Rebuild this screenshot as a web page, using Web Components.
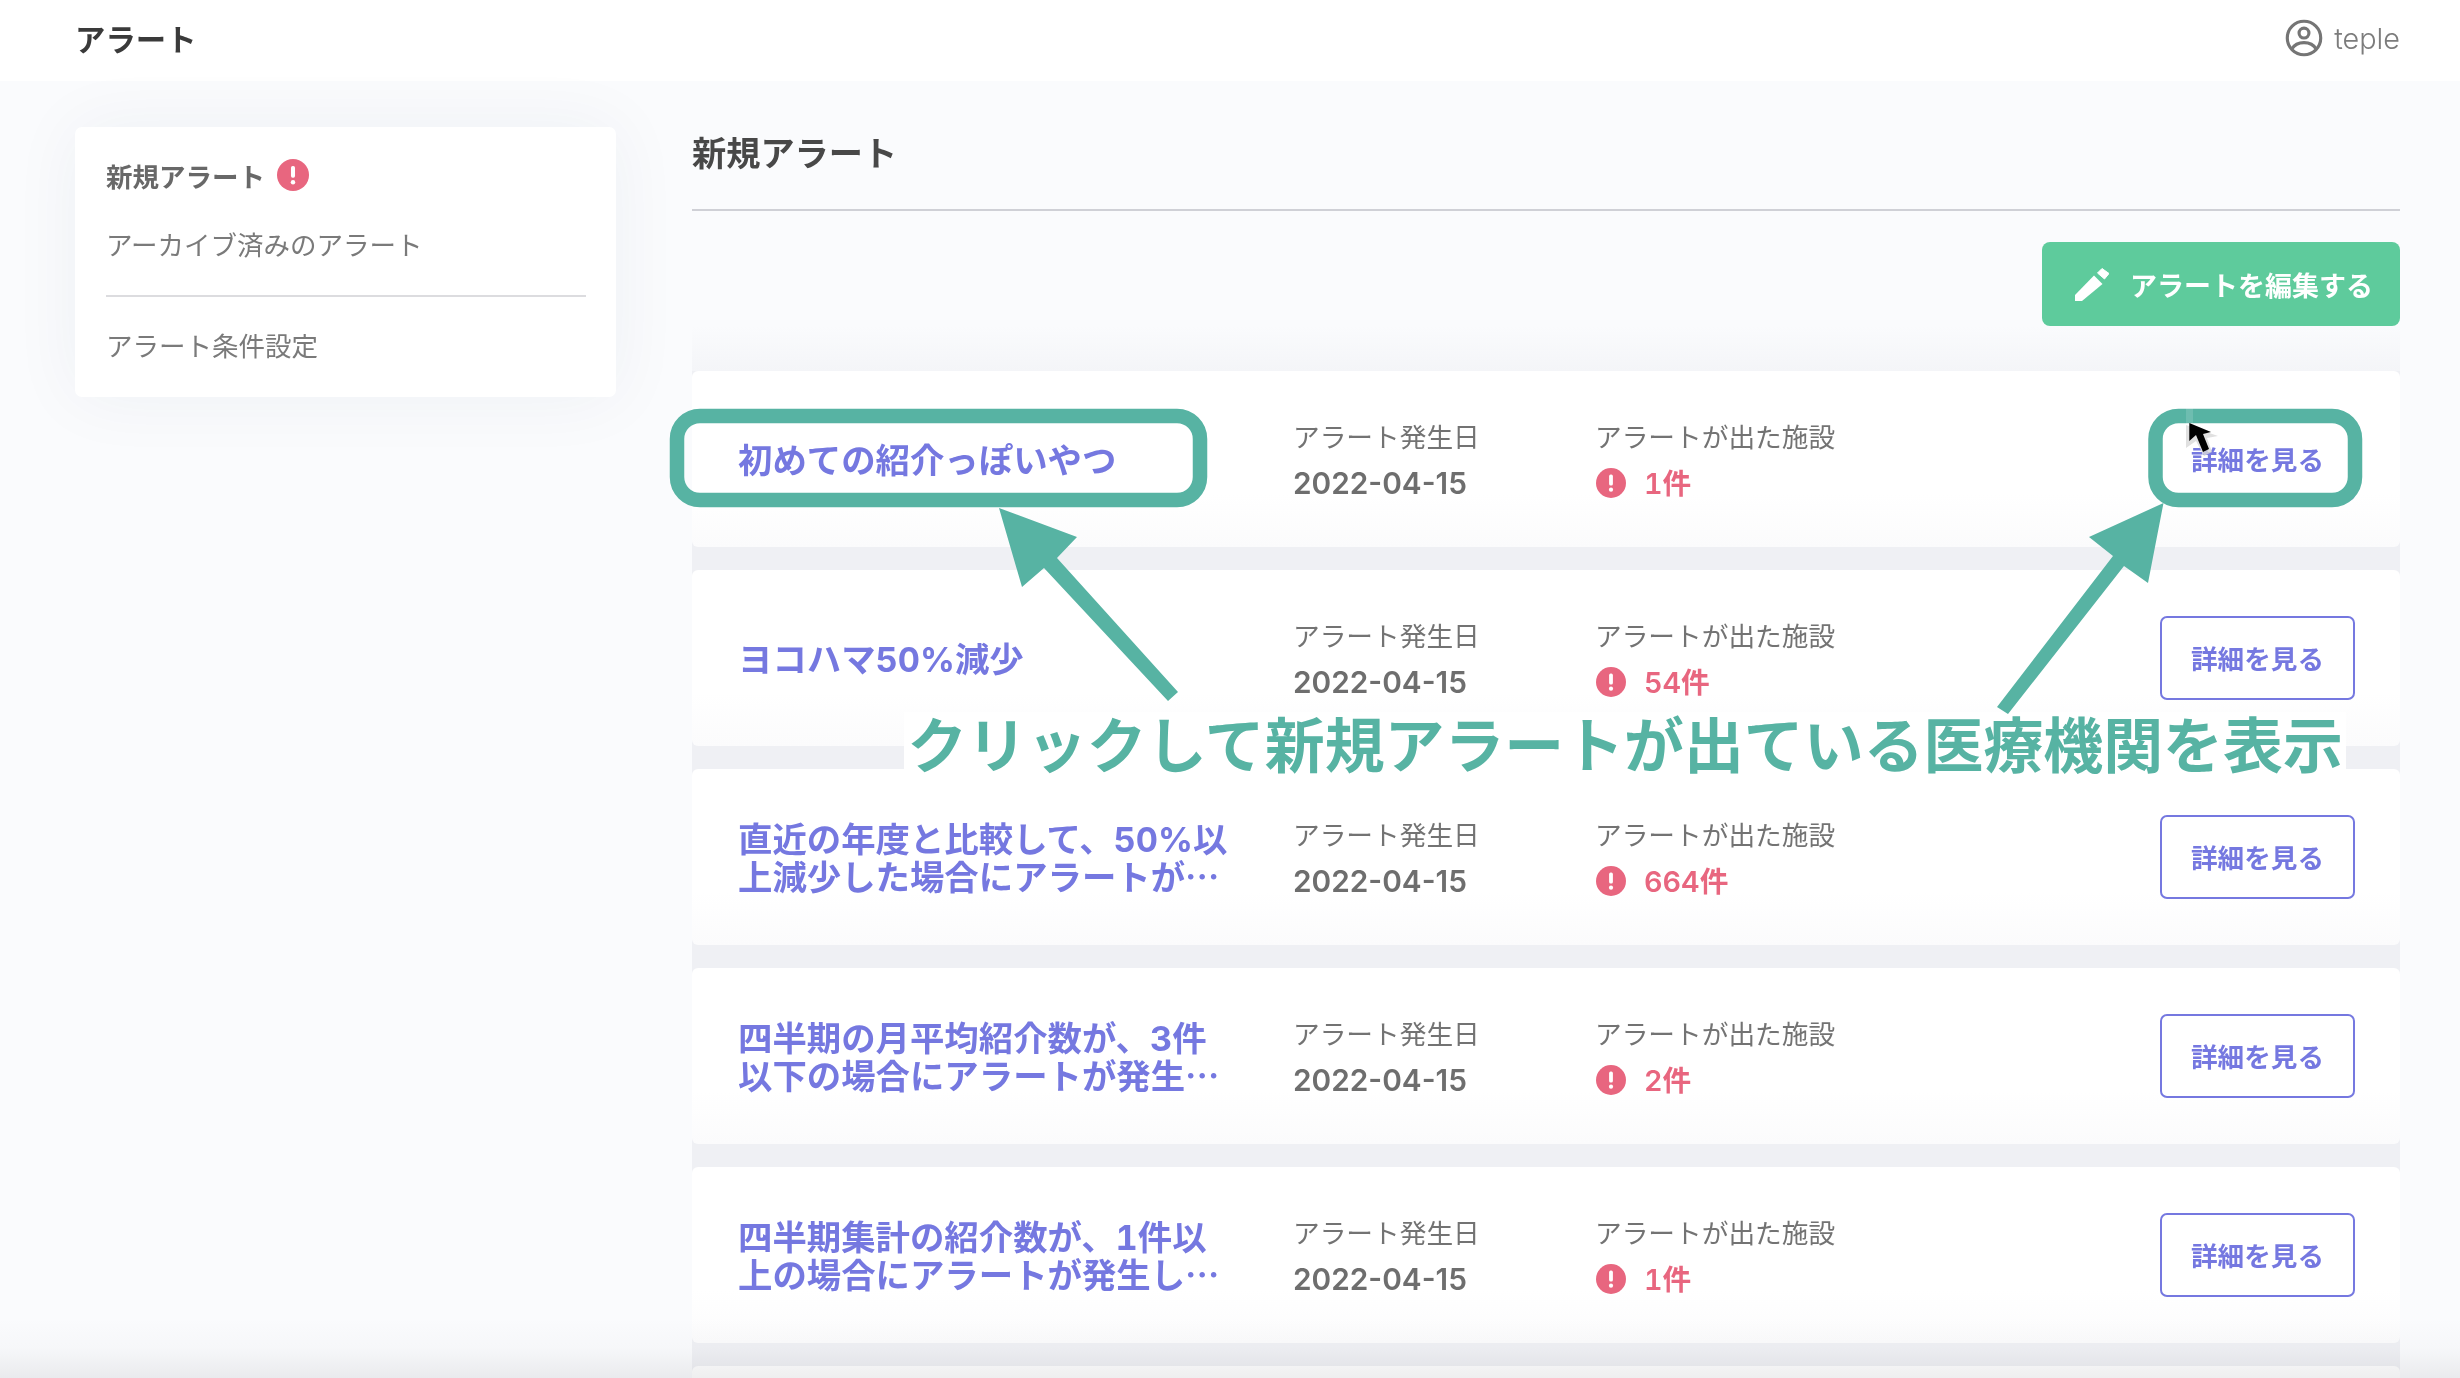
<!DOCTYPE html>
<html lang="ja">
<head>
<meta charset="utf-8">
<title>アラート</title>
<style>
  html, body { margin: 0; height: 1378px; overflow: hidden; background: #fafbfd; }
  body { font-family: Inter, "Noto Sans CJK JP", sans-serif; position: relative; }
</style>
</head>
<body>
<alert-page>
  <app-bar slot="bar" user="teple">アラート</app-bar>
  <side-nav slot="side">
    <nav-item active alert>新規アラート</nav-item>
    <nav-item>アーカイブ済みのアラート</nav-item>
    <nav-rule></nav-rule>
    <nav-item>アラート条件設定</nav-item>
  </side-nav>
  <alert-board slot="main" heading="新規アラート">
    <edit-button slot="action">アラートを編集する</edit-button>
    <alert-row date="2022-04-15" count="1件"><span>初めての紹介っぽいやつ</span></alert-row>
    <alert-row date="2022-04-15" count="54件"><span>ヨコハマ50%減少</span></alert-row>
    <alert-row date="2022-04-15" count="664件"><span>直近の年度と比較して、50%以<br>上減少した場合にアラートが⋯</span></alert-row>
    <alert-row date="2022-04-15" count="2件"><span>四半期の月平均紹介数が、3件<br>以下の場合にアラートが発生⋯</span></alert-row>
    <alert-row date="2022-04-15" count="1件"><span>四半期集計の紹介数が、1件以<br>上の場合にアラートが発生し⋯</span></alert-row>
    <alert-row empty></alert-row>
  </alert-board>
  <guide-layer slot="over">クリックして新規アラートが出ている医療機関を表示</guide-layer>
</alert-page>

<script>
const define = (name, html) => {
  customElements.define(name, class extends HTMLElement {
    constructor() {
      super();
      this.attachShadow({ mode: 'open' }).innerHTML = html;
    }
  });
};

customElements.define('alert-icon', class extends HTMLElement {
  constructor() {
    super();
    this.attachShadow({ mode: 'open' }).innerHTML = `
      <style>:host{display:inline-flex;width:var(--size,30px);height:var(--size,30px);flex:none}svg{width:100%;height:100%;display:block}</style>
      <svg viewBox="0 0 30 30"><circle cx="15" cy="15" r="15" fill="#e8667f"/><rect x="13.1" y="6.6" width="3.8" height="11" rx="1.6" fill="#fff"/><circle cx="15" cy="21.7" r="2.1" fill="#fff"/></svg>`;
  }
});

customElements.define('alert-page', class extends HTMLElement {
  constructor() {
    super();
    this.attachShadow({ mode: 'open' }).innerHTML = `
      <style>
        :host{display:block;height:1378px;overflow:hidden;position:relative;background:#fafbfd;filter:blur(.4px)}
        .body{display:grid;grid-template-columns:541px 1708px;column-gap:76px;padding:46px 60px 0 75px;align-items:start}
        .fade{position:absolute;left:0;right:0;bottom:0;height:60px;pointer-events:none;
              background:linear-gradient(to bottom,rgba(60,60,70,0),rgba(60,60,70,.02) 50%,rgba(60,60,70,.085))}
      </style>
      <slot name="bar"></slot>
      <div class="body"><slot name="side"></slot><slot name="main"></slot></div>
      <div class="fade"></div>
      <slot name="over"></slot>`;
  }
});

customElements.define('app-bar', class extends HTMLElement {
  constructor() {
    super();
    this.attachShadow({ mode: 'open' }).innerHTML = `
      <style>
        :host{display:flex;align-items:center;justify-content:space-between;height:81px;padding:0 60px 6px 75px;background:#fff;box-sizing:border-box}
        .t{font-size:30.4px;font-weight:700;color:#3a3a3a}
        .u{display:flex;align-items:center;gap:11px;color:#7c7c7c;font-size:28.8px;font-weight:300;padding-top:1px}
        svg{width:38px;height:38px;display:block}
      </style>
      <div class="t"><slot></slot></div>
      <div class="u">
        <svg viewBox="0 0 40 40" fill="none" stroke="#757575" stroke-width="3.3">
          <circle cx="20" cy="20" r="17.6"/>
          <circle cx="20" cy="14.8" r="5.2"/>
          <path d="M7.2 31.5C10 26.6 15 24.8 20 24.8s10 1.8 12.8 6.7"/>
        </svg>
        <span>${this.getAttribute('user')}</span>
      </div>`;
  }
});

define('side-nav', `
  <style>
    :host{display:flex;flex-direction:column;box-sizing:border-box;height:270px;background:#fff;border-radius:7px;padding:16px 30px 0 31px;
          box-shadow:0 0 70px rgba(40,50,90,.055)}
  </style><slot></slot>`);

customElements.define('nav-item', class extends HTMLElement {
  constructor() {
    super();
    const a = this.hasAttribute('alert');
    this.attachShadow({ mode: 'open' }).innerHTML = `
      <style>
        :host{display:flex;align-items:center;gap:12px;height:64px;font-size:26.5px;color:#7a7a7a;font-weight:400;--size:32px}
        :host([active]){font-weight:700;color:#686868}
        :host(:nth-of-type(2)){height:72px}
        :host(:last-child){margin-top:15.5px}
      </style><span><slot></slot></span>${a ? '<alert-icon></alert-icon>' : ''}`;
  }
});

define('nav-rule', `<style>:host{display:block;height:2px;background:#dcdcdf;margin-top:16px}</style>`);

customElements.define('alert-board', class extends HTMLElement {
  constructor() {
    super();
    this.attachShadow({ mode: 'open' }).innerHTML = `
      <style>
        :host{display:block}
        h2{margin:0;height:84px;box-sizing:border-box;border-bottom:2px solid #cfd0d6;font-size:34.2px;font-weight:700;color:#484848;line-height:54px}
        .act{display:flex;justify-content:flex-end;margin-top:31px}
        .list{margin-top:0;padding-top:45px;background:linear-gradient(to bottom,#fafbfd,#f4f5f8 100%) top/100% 45px no-repeat,#eff0f4;
              display:flex;flex-direction:column;gap:23px}
      </style>
      <h2>${this.getAttribute('heading')}</h2>
      <div class="act"><slot name="action"></slot></div>
      <div class="list"><slot></slot></div>`;
  }
});

customElements.define('edit-button', class extends HTMLElement {
  constructor() {
    super();
    this.attachShadow({ mode: 'open' }).innerHTML = `
      <style>
        :host{display:inline-flex;align-items:center;gap:21px;height:84px;box-sizing:border-box;padding:0 27px 0 33px;background:#5ecb9c;color:#fff;border-radius:8px;font-size:27px;font-weight:700}
        svg{width:34px;height:33px;display:block}
      </style>
      <svg viewBox="16 12 34 33" fill="#fff">
        <path d="M16 45V39L35 19.5 43.5 28 23 45Z"/>
        <path d="M43 12.5 50 17.5 45.5 23 38.5 17Z" stroke="#fff" stroke-width="1" stroke-linejoin="round"/>
      </svg>
      <span><slot></slot></span>`;
  }
});

customElements.define('detail-button', class extends HTMLElement {
  constructor() {
    super();
    this.attachShadow({ mode: 'open' }).innerHTML = `
      <style>
        :host{display:flex;align-items:center;justify-content:center;width:195px;height:84px;box-sizing:border-box;padding-bottom:2px;border:2px solid #7578e0;border-radius:7px;color:#7578e0;font-size:26.6px;font-weight:700;background:#fff}
      </style><slot></slot>`;
  }
});

customElements.define('alert-row', class extends HTMLElement {
  constructor() {
    super();
    const sh = this.attachShadow({ mode: 'open' });
    const css = `:host{display:grid;grid-template-columns:555px 302px 1fr auto;align-items:center;height:176px;flex:none;box-sizing:border-box;padding:0 45px 0 46px;background:linear-gradient(to bottom,#fff 70%,#fbfbfc);border-radius:6px}`;
    if (this.hasAttribute('empty')) { sh.innerHTML = `<style>${css}</style>`; return; }
    sh.innerHTML = `
      <style>
        ${css}
        .title{font-size:34.4px;line-height:38px;font-weight:700;color:#7578e0;white-space:nowrap;padding-top:4px;font-feature-settings:"tnum"}
        .col{align-self:start;padding-top:43px}
        .label{font-size:26.7px;line-height:47px;color:#737373;white-space:nowrap}
        .date{font-size:29.8px;line-height:45px;font-weight:600;color:#6e6e6e}
        .count{display:flex;align-items:center;gap:18px;height:47px;margin-top:-2px;padding-left:1px;font-size:28.7px;font-weight:600;color:#e8667f;font-feature-settings:"tnum"}
        .count span{padding-bottom:3px}
      </style>
      <div class="title"><slot></slot></div>
      <div class="col"><div class="label">アラート発生日</div><div class="date">${this.getAttribute('date')}</div></div>
      <div class="col"><div class="label">アラートが出た施設</div><div class="count"><alert-icon></alert-icon><span>${this.getAttribute('count')}</span></div></div>
      <detail-button>詳細を見る</detail-button>`;
  }
});

customElements.define('guide-layer', class extends HTMLElement {
  constructor() {
    super();
    this.attachShadow({ mode: 'open' }).innerHTML = `
      <style>
        :host{display:block;position:absolute;inset:0;pointer-events:none}
        .cap{position:absolute;left:904px;top:712px;width:1442px;height:60px;box-sizing:border-box;padding-top:7px;background:#fff;display:flex;align-items:center;justify-content:center;
             font-size:59.9px;font-weight:700;color:#57b3a3;white-space:nowrap;line-height:52px}
        svg{position:absolute;left:0;top:0;width:2460px;height:1378px}
      </style>
      <div class="cap"><slot></slot></div>
      <svg viewBox="0 0 2460 1378" fill="none">
        <rect x="677" y="416" width="523" height="84" rx="23" stroke="#57b3a3" stroke-width="14.5"/>
        <rect x="2155.5" y="416" width="199.5" height="84" rx="23" stroke="#57b3a3" stroke-width="14.5"/>
        <path fill="#57b3a3" d="M999 508 1077 537 1057 558 1178 692 1168 701 1044 568 1022 587Z"/>
        <path fill="#57b3a3" d="M2163.5 503 2148 583 2124 566 2008 714 1997 707 2113 556 2089 537Z"/>
        <path fill="#fff" fill-opacity=".14" d="M2186 405h7v30l-7 15z"/>
        <path fill="#d8d8d8" fill-opacity=".8" d="M2186 425 2186 448 2196 441 2204 456 2212 452 2207 438 2218 436Z"/>
        <path fill="#000" d="M2189.3 423V441L2196 435 2203 452 2209 449 2203 434 2211 432Z"/>
      </svg>`;
  }
});
</script>
</body>
</html>
